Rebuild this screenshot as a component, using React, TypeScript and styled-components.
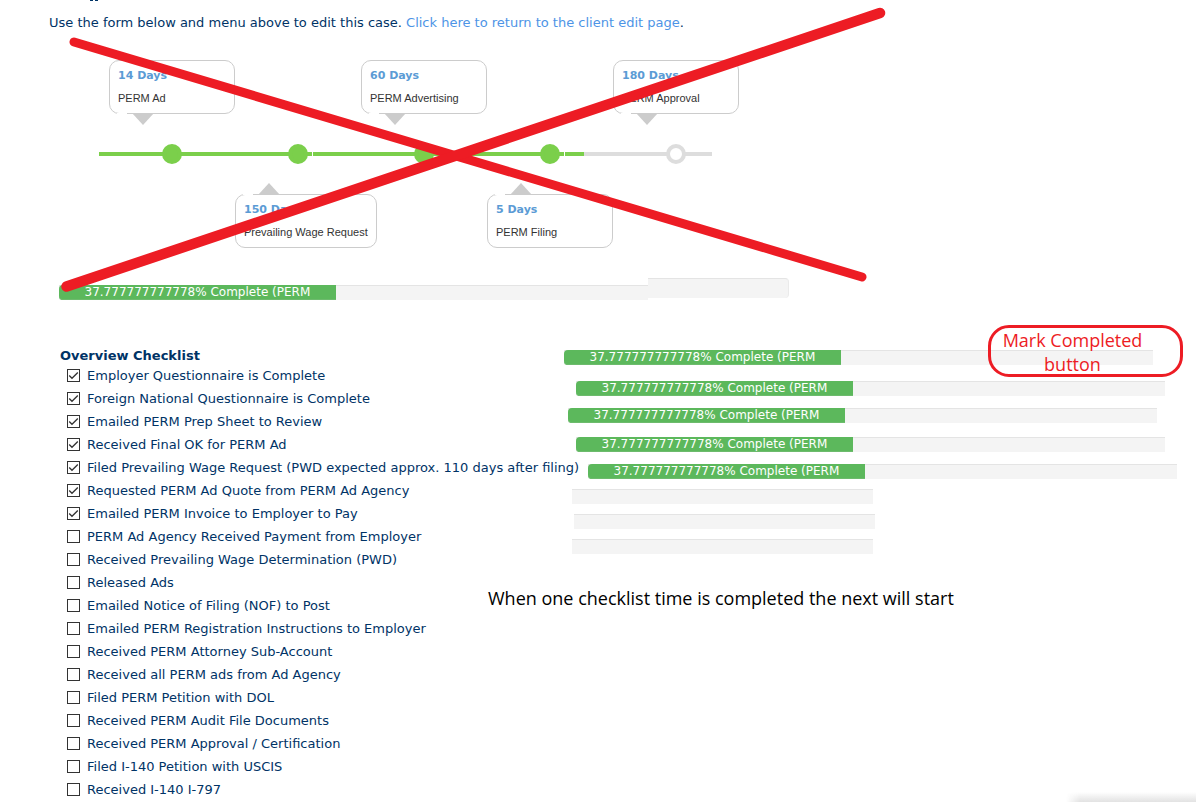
import React from 'react';
import styled, { createGlobalStyle } from 'styled-components';

const GlobalStyle = createGlobalStyle`
  *, *::before, *::after { box-sizing: border-box; }
  body {
    margin: 0;
    background: #fff;
    color: #003366;
    font-family: Verdana, "DejaVu Sans", sans-serif;
    font-size: 13px;
    line-height: 23px;
  }
`;

const Page = styled.div`
  position: relative;
  min-height: 100vh;
`;

const ClippedHeading = styled.div`
  display: flex;
  gap: 2px;
  height: 11px;
  padding-left: 90px;
`;

const Descender = styled.span`
  width: 3px;
  height: 1px;
  background: #003366;
`;

const Intro = styled.p`
  margin: 0 0 26px;
  padding-left: 49px;
`;

const ReturnLink = styled.a`
  color: #4d94e6;
  text-decoration: none;
`;

const Timeline = styled.section`
  display: grid;
  grid-template-columns: repeat(5, 126px);
  grid-template-rows: 54px 80px 54px;
  padding-left: 109px;
`;

const Card = styled.div<{ $column: number; $below?: boolean }>`
  position: relative;
  grid-column: ${(p) => p.$column};
  grid-row: ${(p) => (p.$below ? 3 : 1)};
  display: flex;
  flex-direction: column;
  justify-self: start;
  width: max-content;
  min-width: 126px;
  padding: 3px 8px 0;
  border: 1px solid #ccc;
  border-radius: 10px;
  font-size: 11px;

  &::before {
    content: '';
    position: absolute;
    left: 7px;
    ${(p) => (p.$below ? 'top' : 'bottom')}: -1px;
    width: 10px;
    height: 1px;
    background: #fff;
  }

  &::after {
    content: '';
    position: absolute;
    left: 22px;
    ${(p) => (p.$below ? 'bottom' : 'top')}: 100%;
    border: 0 solid transparent;
    border-width: ${(p) => (p.$below ? '0 11px 12px' : '12px 11px 0')};
    border-${(p) => (p.$below ? 'bottom' : 'top')}-color: #ccc;
  }
`;

const Days = styled.strong`
  color: #5b9bd5;
`;

const Stage = styled.span`
  color: #333;
  font-family: Arial, "Liberation Sans", sans-serif;
  white-space: nowrap;
`;

const Track = styled.div`
  grid-column: 1 / -1;
  grid-row: 2;
  align-self: center;
  display: flex;
  height: 4px;
  margin: 0 27px 0 -10px;
`;

const Segment = styled.span<{ $grow: number; $done?: boolean; $split?: boolean }>`
  flex: ${(p) => p.$grow} 1 0;
  margin-left: ${(p) => (p.$split ? 1 : 0)}px;
  background: ${(p) => (p.$done ? '#7bcf4b' : '#ddd')};
`;

const Dot = styled.span<{ $column: number; $done?: boolean }>`
  grid-column: ${(p) => p.$column};
  grid-row: 2;
  place-self: center;
  width: 20px;
  height: 20px;
  border: 4px solid ${(p) => (p.$done ? '#7bcf4b' : '#ddd')};
  border-radius: 50%;
  background: ${(p) => (p.$done ? '#7bcf4b' : '#fff')};
`;

const Overall = styled.div`
  display: flex;
  align-items: flex-end;
  margin-top: 30px;
  padding-left: 59px;
`;

const OverallEnd = styled.div`
  width: 141px;
  height: 20px;
  margin-bottom: 2px;
  border-top: 1px solid #e4e4e4;
  border-right: 1px solid #eaeaea;
  border-radius: 0 4px 4px 0;
  background: #f4f4f4;
`;

const Bar = styled.div<{ $indent?: number; $gap?: number; $size?: number }>`
  flex: 0 1 589px;
  height: 15px;
  max-width: ${(p) => p.$size ?? 589}px;
  margin: ${(p) => p.$gap ?? 0}px 0 0 ${(p) => p.$indent ?? 0}px;
  background: #f4f4f4;
  border-top: 1px solid #e4e4e4;
`;

const Fill = styled.div`
  width: 47%;
  height: 15px;
  margin-top: -1px;
  border-radius: 4px 0 0 4px;
  background: #5cb85c;
  box-shadow: inset 0 -1px 0 #6dbb6d;
  color: #fff;
  font-size: 12px;
  line-height: 15px;
  text-align: center;
  white-space: nowrap;
`;

const Columns = styled.main`
  display: grid;
  grid-template-columns: 504px 1fr;
  margin-top: 48px;
  padding-left: 60px;
`;

const Title = styled.h2`
  margin: 0;
  font-size: 13px;
  line-height: 16px;
`;

const List = styled.ul`
  margin: 0;
  padding: 0 0 0 7px;
  list-style: none;
`;

const Item = styled.label`
  display: flex;
  align-items: center;
  gap: 7px;
  height: 23px;
  white-space: nowrap;
`;

const BoxCell = styled.span`
  display: grid;
  width: 13px;
  height: 13px;

  > * { grid-area: 1 / 1; }
`;

const Box = styled.input`
  appearance: none;
  width: 13px;
  height: 13px;
  margin: 0;
  border: 1px solid #333;
  background: #fff;
`;

const Tick = styled.svg`
  pointer-events: none;
`;

const Side = styled.div`
  position: relative;
  padding-top: 2px;
`;

const Annotation = styled.p`
  margin: 32px 0 0 -76px;
  color: #000;
  font-family: "Segoe UI", "Open Sans", sans-serif;
  font-size: 18px;
  line-height: 24px;
  white-space: nowrap;
`;

const MarkButton = styled.button`
  position: absolute;
  top: -23px;
  left: 424px;
  width: 195px;
  height: 52px;
  padding: 0 26px 0 0;
  border: 3px solid #ed1c24;
  border-radius: 21px;
  background: transparent;
  color: #ed1c24;
  font-family: "Segoe UI", "Open Sans", sans-serif;
  font-size: 18px;
  line-height: 24px;
`;

const Cross = styled.svg`
  position: absolute;
  top: 0;
  left: 0;
  pointer-events: none;
`;

const CornerShade = styled.div`
  position: absolute;
  right: 0;
  bottom: 0;
  width: 130px;
  height: 10px;
  background: linear-gradient(to bottom, transparent, #e2e2e2);
  mask-image: linear-gradient(to right, transparent, #000 14px);
`;

const stages = [
  { days: '14 Days', name: 'PERM Ad', done: true },
  { days: '150 Days', name: 'Prevailing Wage Request', done: true },
  { days: '60 Days', name: 'PERM Advertising', done: true },
  { days: '5 Days', name: 'PERM Filing', done: true },
  { days: '180 Days', name: 'PERM Approval', done: false },
];

const bars = [
  { indent: 0, gap: 0, filled: true },
  { indent: 12, gap: 16, filled: true },
  { indent: 4, gap: 12, filled: true },
  { indent: 12, gap: 14, filled: true },
  { indent: 24, gap: 12, filled: true },
  { indent: 8, gap: 10, filled: false },
  { indent: 10, gap: 10, filled: false },
  { indent: 8, gap: 10, filled: false },
];

const tasks: [string, boolean][] = [
  ['Employer Questionnaire is Complete', true],
  ['Foreign National Questionnaire is Complete', true],
  ['Emailed PERM Prep Sheet to Review', true],
  ['Received Final OK for PERM Ad', true],
  ['Filed Prevailing Wage Request (PWD expected approx. 110 days after filing)', true],
  ['Requested PERM Ad Quote from PERM Ad Agency', true],
  ['Emailed PERM Invoice to Employer to Pay', true],
  ['PERM Ad Agency Received Payment from Employer', false],
  ['Received Prevailing Wage Determination (PWD)', false],
  ['Released Ads', false],
  ['Emailed Notice of Filing (NOF) to Post', false],
  ['Emailed PERM Registration Instructions to Employer', false],
  ['Received PERM Attorney Sub-Account', false],
  ['Received all PERM ads from Ad Agency', false],
  ['Filed PERM Petition with DOL', false],
  ['Received PERM Audit File Documents', false],
  ['Received PERM Approval / Certification', false],
  ['Filed I-140 Petition with USCIS', false],
  ['Received I-140 I-797', false],
];

const progressText = '37.777777777778% Complete (PERM';

function Task({ text, initial }: { text: string; initial: boolean }) {
  const [checked, setChecked] = React.useState(initial);
  return (
    <li>
      <Item>
        <BoxCell>
          <Box type="checkbox" checked={checked} onChange={() => setChecked(!checked)} />
          {checked && (
            <Tick width="13" height="13" viewBox="0 0 13 13" aria-hidden="true">
              <path d="M2.2 6.5 5 9.3l5.8-5.8" fill="none" stroke="#333" strokeWidth="1.3" />
            </Tick>
          )}
        </BoxCell>
        {text}
      </Item>
    </li>
  );
}

export default function App() {
  return (
    <Page>
      <GlobalStyle />
      <ClippedHeading>
        <Descender />
        <Descender />
      </ClippedHeading>
      <Intro>
        Use the form below and menu above to edit this case.{' '}
        <ReturnLink href="#client">Click here to return to the client edit page</ReturnLink>.
      </Intro>

      <Timeline>
        <Track>
          <Segment $grow={213} $done />
          <Segment $grow={251} $done $split />
          <Segment $grow={19} $done $split />
          <Segment $grow={128} />
        </Track>
        {stages.map((s, i) => (
          <React.Fragment key={s.name}>
            <Dot $column={i + 1} $done={s.done} />
            <Card $column={i + 1} $below={i % 2 === 1}>
              <Days>{s.days}</Days>
              <Stage>{s.name}</Stage>
            </Card>
          </React.Fragment>
        ))}
      </Timeline>

      <Overall>
        <Bar>
          <Fill>{progressText}</Fill>
        </Bar>
        <OverallEnd />
      </Overall>

      <Columns>
        <section>
          <Title>Overview Checklist</Title>
          <List>
            {tasks.map(([text, done]) => (
              <Task key={text} text={text} initial={done} />
            ))}
          </List>
        </section>
        <Side>
          {bars.map((b, i) => (
            <Bar key={i} $indent={b.indent} $gap={b.gap} $size={b.filled ? 589 : 301}>
              {b.filled && <Fill>{progressText}</Fill>}
            </Bar>
          ))}
          <MarkButton type="button">
            Mark Completed
            <br />
            button
          </MarkButton>
          <Annotation>When one checklist time is completed the next will start</Annotation>
        </Side>
      </Columns>

      <Cross width="900" height="300" viewBox="0 0 900 300" aria-hidden="true">
        <g stroke="#ed1c24" strokeLinecap="round">
          <path d="M74 42 862 277" strokeWidth="9" />
          <path d="M66.500 286.500 880 13" strokeWidth="10.500" />
        </g>
      </Cross>
      <CornerShade />
    </Page>
  );
}
